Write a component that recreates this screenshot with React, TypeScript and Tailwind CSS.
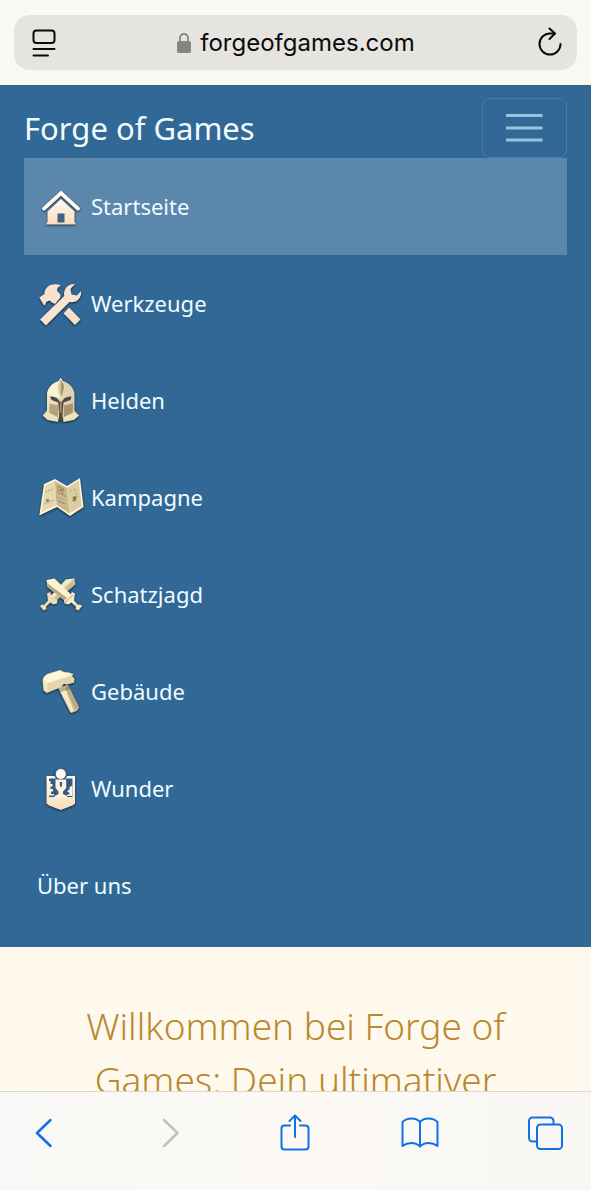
import type { ReactNode } from "react";

function IconBox({ children }: { children: ReactNode }) {
  return (
    <svg viewBox="0 0 48 48" aria-hidden="true" className="size-12 shrink-0 overflow-visible drop-shadow-[0_1px_1px_rgba(15,25,40,0.85)]">
      <defs>
        <linearGradient id="cream" x1="0" y1="0" x2="0" y2="1">
          <stop offset="0" stopColor="#fffaf0" />
          <stop offset="1" stopColor="#fbdcb9" />
        </linearGradient>
        <linearGradient id="bone" x1="0" y1="0" x2="1" y2="1">
          <stop offset="0" stopColor="#fff8dc" />
          <stop offset="1" stopColor="#c9bb93" />
        </linearGradient>
      </defs>
      {children}
    </svg>
  );
}

const HouseIcon = () => (
  <IconBox>
    <path d="M24 7.5 42.5 24.5q1.200 1.500-.2 2.500t-2.600 0L24 12.800 8.300 27q-1.400 1-2.600 0t-.2-2.500Z" fill="#fffaf1" />
    <path d="M24 16 37.500 28.500v11h1V41.500H9.500v-2h1V28.500Z" fill="url(#cream)" />
    <path d="M20.500 30.500h7v9h-7Z" fill="#3d6288" />
  </IconBox>
);

const ToolsIcon = () => (
  <IconBox>
    <path d="m32 27.500 11.500 12-5.500 5.500L26.500 33.500Z" fill="#f8dfc8" />
    <path d="M2.300 17.500 7.500 14c-.5-4.500 3.500-9 8.500-9.500 3-.5 5.500-.3 8 1-3.500 1.500-4.500 3.500-3.500 6l3 3-.5 3.500-5 6-3-1.500-2.500-2-3.500 1.500-.5 2.500-1.500 1Z" fill="#f9e3cf" />
    <path d="M27.300 16c-1.500-6 3.200-12.500 10.700-12L33.500 9l1 5.500 5.500 1 4-4.500c1 7.500-5 12.500-11.500 11L9 45.500 3 39.500Z" fill="#f9e3cf" />
  </IconBox>
);

const HelmetIcon = () => (
  <IconBox>
    <path d="M23.700 1c1 .5 1.500 1.800 2 3 7.300 2 11.800 8 11.800 14v15.500l4.500 5L37 43l-10.500 2-1.200-5h-3.200L21 45l-10.500-2-4.700-4.500 4.200-5V18c0-6 4.500-12 11.700-14 .5-1.200 1-2.500 2-3Z" fill="url(#bone)" />
    <path d="M10.500 18c0-7 5-12 11-13.500L20 13l3.500 8Z" fill="#fbf2d6" />
    <path d="M26 4.500C33 7 37 12 37 18l-12 3 2.500-8Z" fill="#dfd2ae" />
    <path d="m23.700 2.500 3 5c1 4-.5 8-3 12.500Z" fill="#a8956f" />
    <path d="m23.700 2.500-2 5c-1 4 .5 8 2 12.500Z" fill="#d3c398" />
    <path d="m12.500 26.500 8.500 2v12l-8.500-4Z" fill="#b4a27b" />
    <path d="M36 26.500 27 28.500v12l8.500-4Z" fill="#a8946d" />
    <path d="M13 19.500q7 0 8.500 3.500l2.200 3 2.300-3q1.500-3.500 8.500-3.500l-1 3.500-7 2.500-1 12.500v6h-3.300v-6l-1-12.500-6.700-2.500Z" fill="#4f463d" />
    <path d="m23.700 22 1 5v9h-2v-9Z" fill="#a08d69" />
    <path d="m6 38.500 4-3.500 10.500 5v4.500L10.500 42.500ZM42 38.500 37.500 35 27 40v4.500L37 42.500Z" fill="#eee2bc" />
  </IconBox>
);

const MapIcon = () => (
  <IconBox>
    <path d="m7 10 11-5 12 7 13-8 3.500 29L33 42 20 33 2.300 41.500Z" fill="#fff5d9" />
    <path d="m8.300 11.500 9.700-4.500 1.500 24-15.200 7.500Z" fill="#e6d8b0" />
    <path d="m18 7 12 7 2.500 25.500-13-8.500Z" fill="#c9b88e" />
    <path d="m30 14 11.800-7.500 3 25.500-12.300 7.500Z" fill="#ddcda3" />
    <path d="m8 18 8-3M7 30l10-4M19 23l9 3M33 17l5-2 2 8-5 4" stroke="#b09e74" strokeWidth="1" fill="none" strokeDasharray="2 1" />
    <path d="m21 12 6 3-2 5-4-1ZM25 20l4 3M21 27l7 3" stroke="#99865c" strokeWidth="1" fill="none" />
    <circle cx="10.500" cy="26.500" r="1.800" fill="#a18f64" />
    <circle cx="24" cy="16" r="1.500" fill="#927f57" />
    <path d="m35.500 23 3.500-1 .5 4-3 2Z" fill="#8d7b52" />
  </IconBox>
);

const SwordsIcon = () => (
  <IconBox>
    <path d="m29 8.500 8.500-1 1 6L17 31.500 12 27Z" fill="#cdbd94" />
    <path d="m29 8.500 8.500-1-22 20.500L12 27Z" fill="#f3e8c3" />
    <path d="m10 22.500 3-1.500 2.500 5.500 5 2.500-.5 3.500-4 1-2.500-2-4.500 4 .5 2.500-3 1.500-3.500-4.500 2-1.500 2 .5 4-4.500Z" fill="#eadcb3" />
    <path d="m9.500 9 8-1.500L35 24.500l-6 6L10.500 16Z" fill="#fdf3d1" />
    <path d="m10.500 16-.5-4L31.500 28 29 30.500Z" fill="#b9a980" />
    <path d="m38 22.500-3-1.500-3 5.500-5 2.500.5 3.500 4 1 3-2 4.500 4-.5 2.500 3 1.500 3.500-4.500-2-1.500-2 .5-4-4.500Z" fill="#f7ebc7" />
    <path d="m27.500 32 8.500-8M35 32l4.500 4" stroke="#b5a47a" strokeWidth="1" />
  </IconBox>
);

const HammerIcon = () => (
  <IconBox>
    <path d="M21 19.500 31 17 42 39.500q-1 4-7.500 5.500L33 44Z" fill="url(#bone)" />
    <path d="m24 21.500 3-1 9.500 22-2 2Z" fill="#f7ebc8" />
    <path d="m31 17 11 22-4 3-9.500-21Z" fill="#bba981" />
    <path d="M21 19.500 31 17l2 4-10.500 3.500Z" fill="#756a52" opacity="0.5" />
    <path d="M5.500 12q1-4 4.500-6L23 2l4 2 5 .5L36.500 6 35 8l2.500 3-.5 3.500-7.500 2-2.500-1-3 3.500L10 25l-3.500-2.500Z" fill="#f0e5bd" />
    <path d="M6.500 11.500 10 6.500 23 3l4 1.500 7 1-6 4.500-5 1-12.500 4Z" fill="#fff7d8" />
    <path d="m10.500 15.500 12.500-4.500 4.500-1 7-2 2.500 3.500v3l-7.500 2-2.500-1-3 3.500L10.500 24Z" fill="#e3d6ad" />
  </IconBox>
);

const WonderIcon = () => (
  <IconBox>
    <path d="M9.500 11H38v27.500l-2.500 2-11.700 4.500L12 40.500l-2.500-2Z" fill="url(#cream)" />
    <path d="M12 13.500h23.500V32H12Z" fill="#345a82" />
    <circle cx="23.800" cy="9.500" r="6.500" fill="#316896" />
    <path d="M18.500 14.500h10.700v8.500L26 26.500v2.500l4 2v2H17.500v-2l4-2v-2.500l-3-3.500Z" fill="#fff1df" />
    <circle cx="23.800" cy="9" r="5" fill="#fff8ee" />
    <path d="M22.800 17h2.200v3l-.7 2h-1l-.5-2Z" fill="#345a82" />
    <path d="M12 16h1.500v3h2v2.500h-2V24h2.500v2.500h-2V29H17v1.500h-5ZM35.500 20l-3 2.500v2L30 26l2.500 2v1.500H30V31h5.500Z" fill="#fff1df" />
  </IconBox>
);

const items = [
  { label: "Startseite", Icon: HouseIcon, active: true },
  { label: "Werkzeuge", Icon: ToolsIcon },
  { label: "Helden", Icon: HelmetIcon },
  { label: "Kampagne", Icon: MapIcon },
  { label: "Schatzjagd", Icon: SwordsIcon },
  { label: "Gebäude", Icon: HammerIcon },
  { label: "Wunder", Icon: WonderIcon },
  { label: "Über uns" },
];

function AddressBar() {
  return (
    <header className="h-[85px] shrink-0 bg-[#f9f8f4] px-3.5 pt-[15px]">
      <div className="flex h-[55px] items-center justify-between rounded-2xl bg-[#e5e4e0] px-3.5">
        <button type="button" aria-label="Seitenmenü">
          <svg viewBox="0 0 32 32" className="size-8" fill="none" stroke="#0b0b0b" strokeWidth="2" strokeLinecap="round">
            <rect x="5.500" y="3.500" width="21" height="12.500" rx="3" />
            <path d="M5.500 22h21M5.500 28.500h14.500" />
          </svg>
        </button>
        <div className="flex items-center gap-2 pr-1 font-['Inter','Liberation_Sans',sans-serif] text-2xl text-[#0b0b0b]">
          <svg viewBox="0 0 16 22" aria-hidden="true" className="h-[22px] w-4">
            <path d="M4 10V6a4 4 0 0 1 8 0V10" fill="none" stroke="#858584" strokeWidth="1.800" />
            <rect x="1" y="9" width="14" height="12" rx="2" fill="#858584" />
          </svg>
          <span>forgeofgames.com</span>
        </div>
        <button type="button" aria-label="Neu laden">
          <svg viewBox="0 0 28 32" className="h-8 w-7" fill="none" stroke="#0b0b0b" strokeWidth="2" strokeLinecap="round" strokeLinejoin="round">
            <path d="M25.500 17A10.500 10.500 0 1 1 15 6.500H19.500" />
            <path d="m14.500 1.500 5.500 5-5.500 5.500" />
          </svg>
        </button>
      </div>
    </header>
  );
}

function SiteNav() {
  return (
    <nav className="shrink-0 border-t border-[#3a6079] bg-[#316896] px-6 pt-3 pb-[13px] text-[#f0fcff]">
      <div className="flex items-center justify-between">
        <a href="#start" className="text-[31px] leading-10">Forge of Games</a>
        <button type="button" aria-label="Navigation umschalten" className="flex h-[60px] w-[85px] items-center justify-center rounded-lg border border-[#487ba5]">
          <svg viewBox="0 0 38 30" className="h-[30px] w-[38px]" stroke="#9dc0dc" strokeWidth="3">
            <path d="M0 2.500h36.500M0 15h36.500M0 27h36.500" />
          </svg>
        </button>
      </div>
      <ul>
        {items.map(({ label, Icon, active }) => (
          <li key={label}>
            <a
              href="#start"
              aria-current={active ? "page" : undefined}
              className={active ? "flex h-[97px] items-center gap-1.5 bg-[#5b87ad] px-[13px] text-[22px]" : "flex h-[97px] items-center gap-1.5 px-[13px] text-[22px]"}
            >
              {Icon && <Icon />}
              <span>{label}</span>
            </a>
          </li>
        ))}
      </ul>
    </nav>
  );
}

const toolButton = "flex h-12 w-12 items-center justify-center";

function Toolbar() {
  return (
    <footer className="flex h-[99px] shrink-0 items-start justify-between border-t border-[#dbd8cf] bg-linear-to-r from-[#f8f8f6] via-[#fcf9f4] to-[#f8f7f4] pt-4 pr-[22px] pl-5 text-[#1170e4]">
      <button type="button" aria-label="Zurück" className={toolButton}>
        <svg viewBox="0 0 40 40" className="size-10" fill="none" stroke="currentColor" strokeWidth="2.500" strokeLinecap="round" strokeLinejoin="round">
          <path d="M26.500 8 13 21l13.500 13" />
        </svg>
      </button>
      <button type="button" aria-label="Vorwärts" disabled className={toolButton}>
        <svg viewBox="0 0 40 40" className="size-10" fill="none" stroke="#c1c0bc" strokeWidth="2.500" strokeLinecap="round" strokeLinejoin="round">
          <path d="M15 8 28.500 21 15 34" />
        </svg>
      </button>
      <button type="button" aria-label="Teilen" className={toolButton}>
        <svg viewBox="0 0 40 40" className="size-10" fill="none" stroke="currentColor" strokeWidth="2" strokeLinecap="round" strokeLinejoin="round">
          <path d="M15 13.500H9.500a3 3 0 0 0-3 3V34.500a3 3 0 0 0 3 3h21a3 3 0 0 0 3-3V16.500a3 3 0 0 0-3-3H25M20 25V3.500M14.500 9 20 3.500 25.500 9" />
        </svg>
      </button>
      <button type="button" aria-label="Lesezeichen" className={toolButton}>
        <svg viewBox="0 0 40 40" className="size-10" fill="none" stroke="currentColor" strokeWidth="2" strokeLinejoin="round">
          <path d="M20 10Q17 6.500 11.500 6.500T2.500 10v24q4-3 9-3t8.500 3.500q3.500-3.500 8.500-3.500t9 3V10q-3.500-3.500-9-3.500T20 10Zm0 0v24.500" />
        </svg>
      </button>
      <button type="button" aria-label="Tabs" className={toolButton}>
        <svg viewBox="0 0 40 40" className="size-10" fill="none" stroke="currentColor" strokeWidth="2" strokeLinejoin="round">
          <path d="M12 29.500H7.500a3.500 3.500 0 0 1-3.500-3.500V9a3.500 3.500 0 0 1 3.500-3.500H25A3.500 3.500 0 0 1 28.500 9v3.500" />
          <rect x="12" y="12.500" width="25" height="24.500" rx="3.500" />
        </svg>
      </button>
    </footer>
  );
}

export default function App() {
  return (
    <div className="flex h-screen flex-col overflow-hidden bg-[#fef9ec] font-['Noto_Sans','Open_Sans',sans-serif]">
      <AddressBar />
      <div className="min-h-0 flex-1 overflow-hidden">
        <SiteNav />
        <main className="px-12 pt-[52px]">
          <h1 className="text-center text-[37px] leading-[54px] font-light text-[#b98931]">
            Willkommen bei Forge of Games: Dein ultimativer
          </h1>
        </main>
      </div>
      <Toolbar />
    </div>
  );
}
